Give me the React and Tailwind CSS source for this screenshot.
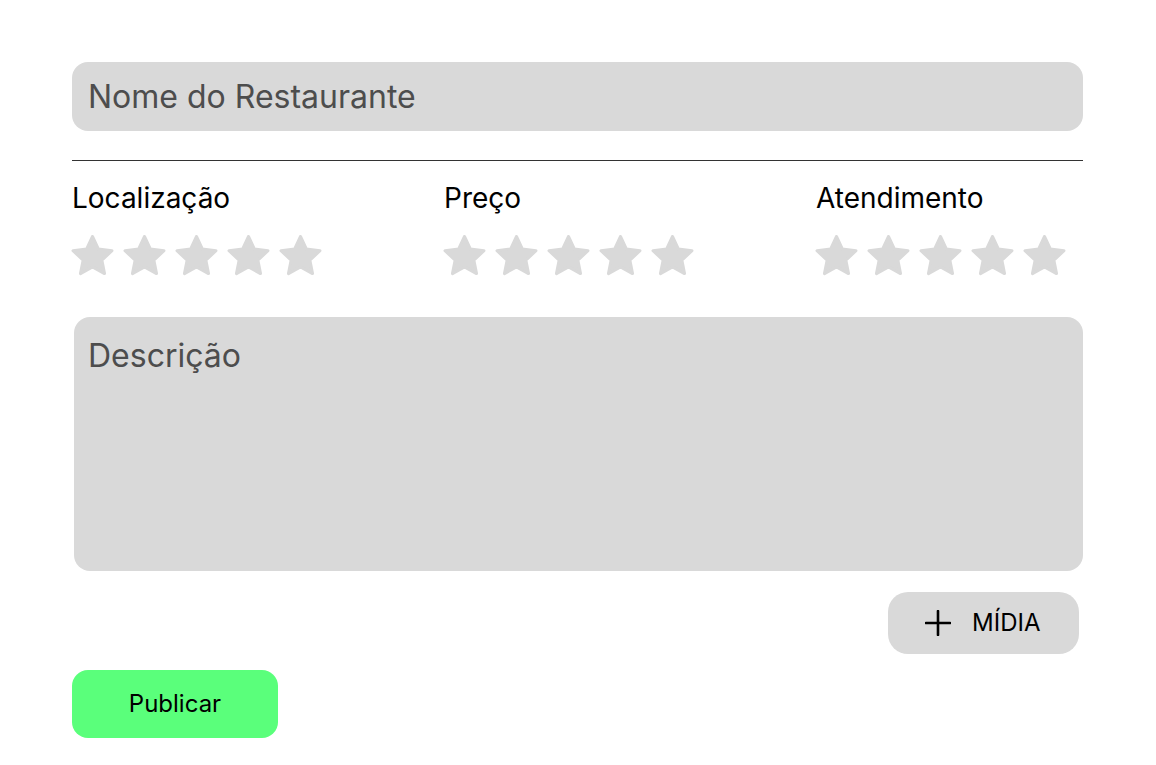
import React from "react";

function Star() {
  return (
    <svg viewBox="0 0 43 41" className="w-[43px] h-[41px]">
      <polygon
        points="21.5,1.5 27.3,13.9 41,15.67 30.9,25.2 33.55,38.58 21.5,31.9 9.45,38.58 12.1,25.2 2,15.67 15.7,13.9"
        fill="#d9d9d9"
        stroke="#d9d9d9"
        strokeWidth="3"
        strokeLinejoin="round"
      />
    </svg>
  );
}

function Rating({ label }) {
  return (
    <div className="flex flex-col">
      <span className="text-[28px] leading-none text-black">{label}</span>
      <div className="flex gap-[9px] mt-[23px] -ml-[1px]">
        {[0, 1, 2, 3, 4].map((i) => (
          <Star key={i} />
        ))}
      </div>
    </div>
  );
}

export default function App() {
  return (
    <div
      className="w-[1156px] h-[765px] bg-white px-[72px] pt-[62px]"
      style={{ fontFamily: "Inter, 'Noto Sans', sans-serif" }}
    >
      <div className="w-[1011px] h-[69px] rounded-[16px] bg-[#d9d9d9] flex items-center px-[16px]">
        <span className="text-[32px] leading-none text-[#4d4d4d]">Nome do Restaurante</span>
      </div>
      <div className="w-[1011px] h-px bg-[#333] mt-[29px]" />
      <div className="grid grid-cols-[372px_372px_1fr] mt-[23px]">
        <Rating label="Localização" />
        <Rating label="Preço" />
        <Rating label="Atendimento" />
      </div>
      <div className="ml-[2px] w-[1009px] h-[254px] rounded-[16px] bg-[#d9d9d9] mt-[41px] px-[14px] pt-[23px]">
        <span className="text-[32px] leading-none text-[#4d4d4d]">Descrição</span>
      </div>
      <div className="flex justify-end w-[1007px] mt-[21px]">
        <button className="w-[191px] h-[62px] rounded-[20px] bg-[#d9d9d9] flex items-center pl-[37px] gap-[21px]">
          <svg viewBox="0 0 26 26" className="w-[26px] h-[26px]" stroke="black" strokeWidth="2.6" strokeLinecap="round">
            <path d="M13 1v24M1 13h24" />
          </svg>
          <span className="text-[24px] leading-none text-black">MÍDIA</span>
        </button>
      </div>
      <button className="mt-[16px] w-[206px] h-[68px] rounded-[16px] bg-[#5aff7b] flex items-center justify-center">
        <span className="text-[24px] leading-none text-black">Publicar</span>
      </button>
    </div>
  );
}
